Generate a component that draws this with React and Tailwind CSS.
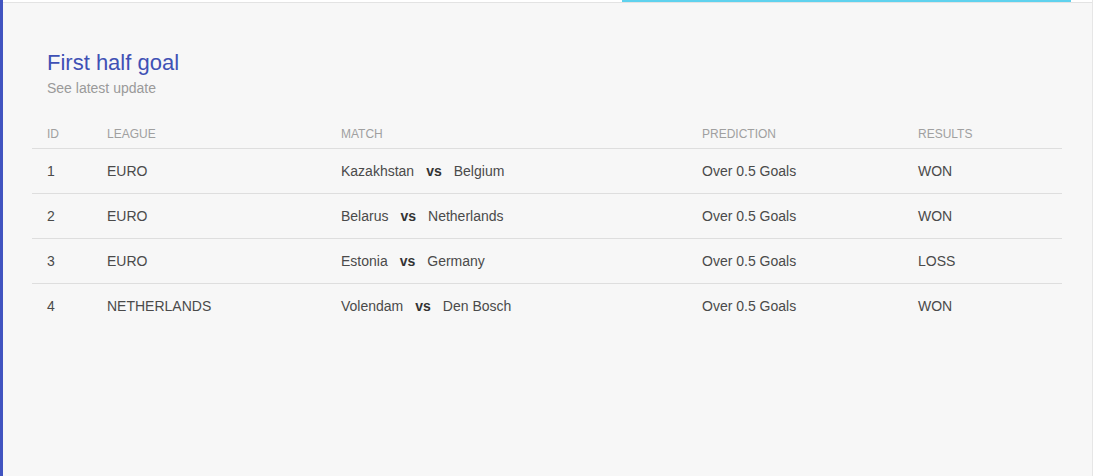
import React from "react";

const rows = [
  { id: 1, league: "EURO", home: "Kazakhstan", away: "Belgium", prediction: "Over 0.5 Goals", result: "WON" },
  { id: 2, league: "EURO", home: "Belarus", away: "Netherlands", prediction: "Over 0.5 Goals", result: "WON" },
  { id: 3, league: "EURO", home: "Estonia", away: "Germany", prediction: "Over 0.5 Goals", result: "LOSS" },
  { id: 4, league: "NETHERLANDS", home: "Volendam", away: "Den Bosch", prediction: "Over 0.5 Goals", result: "WON" },
];

const cols = "grid grid-cols-[60px_234px_361px_216px_1fr]";

export default function App() {
  return (
    <div
      className="w-[1093px] h-[476px] bg-white flex font-['Liberation_Sans',Arial,sans-serif]"
    >
      <div className="w-[3px] bg-[#4154c0]" />
      <div className="flex-1 flex flex-col border-r border-[#e6e6e6]">
        <div className="h-[2px] flex bg-white">
          <div className="ml-[619px] w-[449px] bg-[#5fd2ee]" />
        </div>
        <div className="flex-1 bg-[#f7f7f7] border-t border-[#e3e3e3] pl-[29px] pr-[30px] pt-[47px]">
          <div className="pl-[15px]">
            <h2 className="text-[22px] leading-[26px] text-[#3f51b5]">First half goal</h2>
            <p className="mt-[2px] text-[14px] leading-5 text-[#9a9a9a]">See latest update</p>
          </div>
          <div className="mt-[28px] w-[1030px]">
            <div className={`${cols} border-b border-[#dedede] text-[12px] leading-4 text-[#a0a0a0] pb-[6px]`}>
              <div className="pl-[15px]">ID</div>
              <div className="pl-[15px]">LEAGUE</div>
              <div className="pl-[15px]">MATCH</div>
              <div className="pl-[15px]">PREDICTION</div>
              <div className="pl-[15px]">RESULTS</div>
            </div>
            {rows.map((r, i) => (
              <div
                key={r.id}
                className={`${cols} text-[14px] leading-5 text-[#4a4a4a] py-3 ${
                  i < rows.length - 1 ? "border-b border-[#dedede]" : ""
                }`}
              >
                <div className="pl-[15px]">{r.id}</div>
                <div className="pl-[15px]">{r.league}</div>
                <div className="pl-[15px] flex gap-3">
                  <span>{r.home}</span>
                  <span className="font-bold text-[#333]">vs</span>
                  <span>{r.away}</span>
                </div>
                <div className="pl-[15px]">{r.prediction}</div>
                <div className="pl-[15px]">{r.result}</div>
              </div>
            ))}
          </div>
        </div>
      </div>
    </div>
  );
}
